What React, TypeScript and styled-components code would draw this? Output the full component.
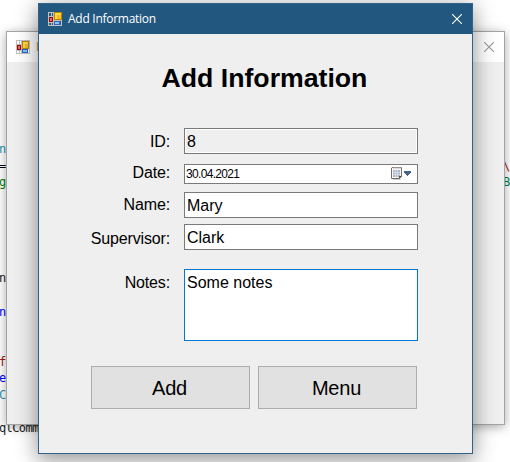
import React from "react";
import styled, { createGlobalStyle } from "styled-components";

const GlobalStyle = createGlobalStyle`
  * { box-sizing: border-box; }
  body { margin: 0; background: #fff; overflow: hidden; }
`;

const Desktop = styled.main`
  position: relative;
  width: 510px;
  height: 462px;
  overflow: hidden;
  background: #fff;
  font-family: "Liberation Sans", Arial, sans-serif;
  color: #000;
`;

const Code = styled.div`
  display: flex;
  flex-direction: column;
  padding-top: 141px;
  margin-left: -1px;
  font-family: "DejaVu Sans Mono", monospace;
  font-size: 12px;
  letter-spacing: -0.62px;
`;

const CodeLine = styled.div<{ $skip: number; $color: string }>`
  display: flex;
  justify-content: space-between;
  flex: none;
  height: 16px;
  line-height: 16px;
  margin-top: ${(p) => p.$skip}px;
  color: ${(p) => p.$color};
  white-space: pre;
`;

const CodeTail = styled.span<{ $color: string }>`
  width: 7px;
  color: ${(p) => p.$color};
`;

const Window = styled.section<{ $x: number; $y: number; $w: number; $h: number; $active?: boolean }>`
  position: absolute;
  left: ${(p) => p.$x}px;
  top: ${(p) => p.$y}px;
  width: ${(p) => p.$w}px;
  height: ${(p) => p.$h}px;
  display: flex;
  flex-direction: column;
  background: #efefef;
  border: 1px solid ${(p) => (p.$active ? "#2f638c" : "#a3a4a3")};
  box-shadow: ${(p) =>
    p.$active ? "0 5px 20px 1px rgba(0, 0, 0, 0.42)" : "0 2px 10px rgba(0, 0, 0, 0.34)"};
`;

const TitleBar = styled.header<{ $active?: boolean }>`
  display: flex;
  align-items: center;
  flex: none;
  height: 30px;
  padding: 0 10px 0 9px;
  background: ${(p) => (p.$active ? "#22577f" : "#fff")};
  color: ${(p) => (p.$active ? "#fff" : "#999")};
`;

const Caption = styled.span<{ $color?: string }>`
  flex: 1;
  margin-left: 6px;
  color: ${(p) => p.$color ?? "inherit"};
  font: 12px/16px "Open Sans", "Noto Sans", sans-serif;
  letter-spacing: -0.27px;
  white-space: nowrap;
`;

const Heading = styled.h1`
  margin: 28px 0 0;
  padding-left: 18px;
  font-size: 26.67px;
  line-height: 32px;
  text-align: center;
`;

const Form = styled.div`
  display: grid;
  grid-template-columns: 131px 234px;
  column-gap: 14px;
  grid-template-rows: 36px 28px 32px 45px 72px;
  margin-top: 34px;
`;

const Label = styled.label<{ $top: number }>`
  padding-top: ${(p) => p.$top}px;
  font-size: 16px;
  line-height: 18px;
  letter-spacing: -0.15px;
  text-align: right;
  white-space: nowrap;
`;

const Field = styled.div<{ $h: number; $focus?: boolean; $locked?: boolean }>`
  height: ${(p) => p.$h}px;
  padding: 4px 2px 0;
  border: 1px solid ${(p) => (p.$focus ? "#0078d7" : "#7a7a7a")};
  background: ${(p) => (p.$locked ? "#efefef" : "#fff")};
  box-shadow: ${(p) => (p.$locked ? "inset 0 0 0 1px #fff" : "none")};
  font-size: 16px;
  line-height: 18px;
`;

const DateField = styled.div`
  display: flex;
  align-items: center;
  justify-content: space-between;
  height: 20px;
  padding: 0 5px 0 1px;
  border: 1px solid #7a7a7a;
  background: #fff;
  font-size: 12px;
  line-height: 18px;
  letter-spacing: -0.68px;
`;

const Actions = styled.div`
  display: flex;
  gap: 8px;
  margin: 25px 0 0 52px;
`;

const Button = styled.button`
  width: 159px;
  height: 43px;
  padding: 0 2px 0 0;
  border: 1px solid #adadad;
  background: #e1e1e1;
  color: #000;
  font: 20px/22px "Liberation Sans", Arial, sans-serif;
  letter-spacing: -0.2px;
`;

const AppIcon = () => (
  <svg width="14" height="14" viewBox="0 0 14 14" shapeRendering="crispEdges">
    <path d="M0 0h14v14H0z" fill="#bfc1c2" />
    <path d="M1 1h4v3H1zM1 11h2v2H1zM4 11h1v2H4zM12 9h1v4h-1z" fill="#2d5877" />
    <path d="M3 1h1v3H3z" fill="#bfc1c2" />
    <path d="M6 0h8v8H6z" fill="#b88700" />
    <path d="M7 1h6v6H7z" fill="#ffd84e" />
    <path d="M9 3h4v4H9z" fill="#f5bd22" />
    <path d="M1 5h4v5H1z" fill="#9b0b0b" />
    <path d="M2 6h2v3H2z" fill="#ee6557" />
    <path d="M6 9h6v4H6z" fill="#2c66c8" />
    <path d="M7 10h4v2H7z" fill="#8bc3ff" />
  </svg>
);

const InactiveAppIcon = () => (
  <svg width="14" height="14" viewBox="0 0 14 14" shapeRendering="crispEdges">
    <path d="M0 0h14v14H0z" fill="#bfc1c2" />
    <path d="M1 1h4v3H1zM1 11h2v2H1zM4 11h1v2H4zM12 9h1v4h-1z" fill="#fff" />
    <path d="M3 1h1v3H3z" fill="#bfc1c2" />
    <path d="M6 1h7v8H6z" fill="#b88700" />
    <path d="M7 2h5v6H7z" fill="#ffd84e" />
    <path d="M9 4h3v4H9z" fill="#f5bd22" />
    <path d="M1 5h4v5H1z" fill="#9b0b0b" />
    <path d="M2 6h2v3H2z" fill="#ee6557" />
    <path d="M6 9h6v4H6z" fill="#2c66c8" />
    <path d="M7 10h4v2H7z" fill="#8bc3ff" />
  </svg>
);

const CloseIcon = () => (
  <svg width="10" height="10" viewBox="0 0 10 10" fill="none" stroke="currentColor" strokeWidth="1.1">
    <path d="M0 0l10 10M10 0L0 10" />
  </svg>
);

const CalendarIcon = () => (
  <svg width="21" height="14" viewBox="0 0 21 14">
    <path d="M2 12h8v1H2z" fill="#c9c9c9" />
    <path d="M1 .5h9.5v8.8l-2.2 2.2H.5V1z" fill="#f7f8fb" stroke="#776d68" />
    <path d="M2 1h8" stroke="#c9b9a9" />
    <path d="M2 3h7v7H2z" fill="#acb8c8" />
    <path d="M2 5.5h7M2 7.5h7M4.5 3v7M6.5 3v7" stroke="#e8edf5" strokeWidth=".6" />
    <path d="M8 12V9h3z" fill="#54504e" />
    <path d="M13 4h7v2h-1v1h-1v1h-1v1h-1V8h-1V7h-1V6h-1z" fill="#48608c" shapeRendering="crispEdges" />
  </svg>
);

const codeLines = [
  { text: "np", color: "#2b91af", skip: 0 },
  { text: "=", color: "#000", skip: 1, tail: "\\", tailColor: "#a31515" },
  { text: "g", color: "#008000", skip: 0, tail: "B", tailColor: "#008040" },
  { text: "nt", color: "#222", skip: 80 },
  { text: "ne", color: "#0000ff", skip: 18 },
  { text: "fo", color: "#a31515", skip: 34 },
  { text: "ev", color: "#0000ff", skip: 0 },
  { text: "Co", color: "#2b91af", skip: 1 },
  { text: "qlComm", color: "#222", skip: 17 },
];

export default function App() {
  return (
    <Desktop>
      <GlobalStyle />
      <Code>
        {codeLines.map((line) => (
          <CodeLine key={line.text} $skip={line.skip} $color={line.color}>
            <span>{line.text}</span>
            {line.tail && <CodeTail $color={line.tailColor}>{line.tail}</CodeTail>}
          </CodeLine>
        ))}
      </Code>

      <Window $x={6} $y={31} $w={499} $h={394}>
        <TitleBar>
          <InactiveAppIcon />
          <Caption $color="#a8853c">I</Caption>
          <CloseIcon />
        </TitleBar>
      </Window>

      <Window $x={38} $y={3} $w={435} $h={451} $active>
        <TitleBar $active>
          <AppIcon />
          <Caption>Add Information</Caption>
          <CloseIcon />
        </TitleBar>
        <Heading>Add Information</Heading>
        <Form>
          <Label $top={5}>ID:</Label>
          <Field $h={26} $locked>8</Field>
          <Label $top={0}>Date:</Label>
          <DateField>
            30.04.2021
            <CalendarIcon />
          </DateField>
          <Label $top={4}>Name:</Label>
          <Field $h={26}>Mary</Field>
          <Label $top={6}>Supervisor:</Label>
          <Field $h={26}>Clark</Field>
          <Label $top={5}>Notes:</Label>
          <Field $h={72} $focus>Some notes</Field>
        </Form>
        <Actions>
          <Button>Add</Button>
          <Button>Menu</Button>
        </Actions>
      </Window>
    </Desktop>
  );
}
